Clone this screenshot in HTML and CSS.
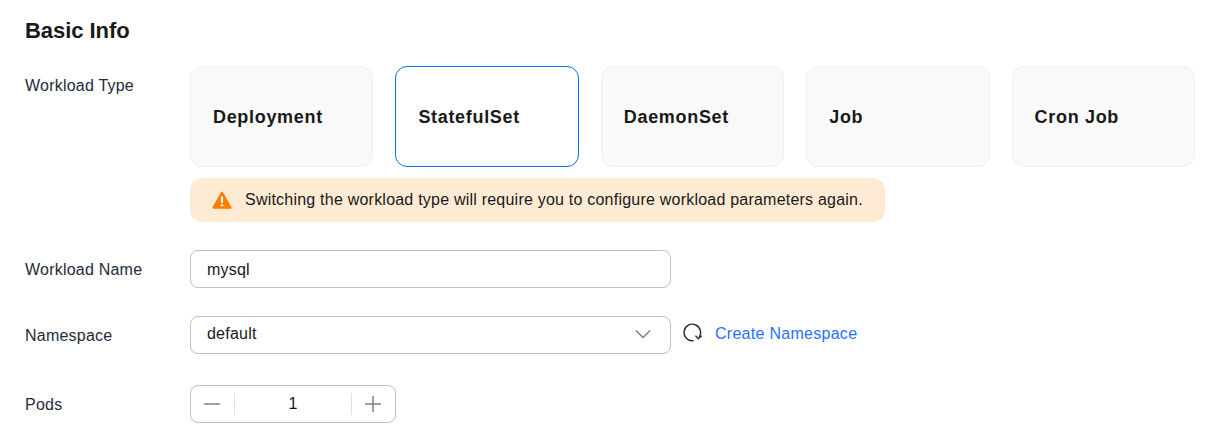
FILE: index.html
```html
<!DOCTYPE html>
<html lang="en">
<head>
<meta charset="utf-8">
<title>Basic Info</title>
<link rel="stylesheet" href="styles.css">
</head>
<body>
<h2 class="title">Basic Info</h2>
<div class="row row-type">
  <div class="label">Workload Type</div>
  <div class="field">
    <div class="cards">
      <div class="card">Deployment</div>
      <div class="card active">StatefulSet</div>
      <div class="card">DaemonSet</div>
      <div class="card">Job</div>
      <div class="card">Cron Job</div>
    </div>
    <div class="alert">
      <svg class="alert-icon" width="20" height="18" viewBox="0 0 20 18"><path d="M10 .6c.4 0 .7.2.9.5l8.6 15.200c.4.700-.1 1.400-.9 1.400H1.400c-.8 0-1.300-.7-.9-1.400L9.100 1.100c.2-.3.500-.5.900-.5z" fill="#ff7d00"/><rect x="9" y="5.500" width="2" height="6.500" rx=".6" fill="#fff"/><circle cx="10" cy="14.300" r="1.200" fill="#fff"/></svg>
      <span>Switching the workload type will require you to configure workload parameters again.</span>
    </div>
  </div>
</div>
<div class="row row-name">
  <div class="label">Workload Name</div>
  <div class="input">mysql</div>
</div>
<div class="row row-ns">
  <div class="label">Namespace</div>
  <div class="input select">
    <span>default</span>
    <svg width="16" height="10" viewBox="0 0 16 10"><path d="M1 1.500l7 7 7-7" fill="none" stroke="#808080" stroke-width="1.500"/></svg>
  </div>
  <svg class="refresh" width="20" height="20" viewBox="0 0 20 20"><path d="M10.500 17.700A8.300 8.300 0 1 1 16 14.400" fill="none" stroke="#252b3a" stroke-width="1.400"/><path d="M12.500 12.600L15.300 15.800 18.800 12.800" fill="none" stroke="#252b3a" stroke-width="1.400"/></svg>
  <a class="link">Create Namespace</a>
</div>
<div class="row row-pods">
  <div class="label">Pods</div>
  <div class="stepper">
    <div class="step"><svg width="16" height="16" viewBox="0 0 16 16"><path d="M0 8h16" stroke="#808080" stroke-width="1.500"/></svg></div>
    <div class="value">1</div>
    <div class="step"><svg width="16" height="16" viewBox="0 0 16 16"><path d="M0 8h16M8 0v16" stroke="#808080" stroke-width="1.500"/></svg></div>
  </div>
</div>
</body>
</html>
```
FILE: styles.css
```css
* { box-sizing: border-box; }
html, body { margin: 0; }
body {
  width: 1218px;
  height: 445px;
  overflow: hidden;
  background: #fff;
  color: #191919;
  font-family: "Liberation Sans", Arial, sans-serif;
  font-size: 16px;
  letter-spacing: .22px;
  padding: 18px 23px 0 25px;
}
.title {
  margin: 0 0 24px;
  padding-top: 1px;
  height: 24px;
  font-size: 22px;
  line-height: 24px;
  font-weight: 700;
  letter-spacing: -.05px;
}
.row { display: flex; align-items: center; }
.label { width: 165px; flex: none; color: #252b3a; padding-top: 2px; }
.row-type { align-items: flex-start; }
.row-type .label { line-height: 36px; }
.field { flex: 1; }
.cards {
  display: grid;
  grid-template-columns: repeat(5, 1fr);
  gap: 22px;
}
.card {
  height: 101px;
  display: flex;
  align-items: center;
  padding-left: 22px;
  padding-top: 2px;
  background: #f9f9f9;
  border: 1px solid #f0f0f0;
  border-radius: 12px;
  font-size: 18px;
  font-weight: 700;
  letter-spacing: .68px;
}
.card.active { background: #fff; border-color: #0a6fe8; }
.alert {
  display: inline-flex;
  align-items: center;
  gap: 13px;
  height: 44px;
  margin-top: 11px;
  padding: 0 22px;
  background: #ffebd4;
  border-radius: 12px;
}
.row-name { margin-top: 28px; }
.input {
  width: 481px;
  height: 38px;
  display: flex;
  align-items: center;
  padding: 2px 16px 0;
  background: #fff;
  border: 1px solid #c0c0c0;
  border-radius: 8px;
}
.row-ns { margin-top: 28px; }
.select { justify-content: space-between; padding: 0 19px 2px 16px; }
.refresh { margin: 0 0 4px 12px; }
.link { margin-left: 12px; padding-bottom: 2px; color: #2a6fff; letter-spacing: .28px; }
.row-pods { margin-top: 31px; }
.stepper {
  width: 206px;
  height: 38px;
  display: flex;
  align-items: center;
  border: 1px solid #c0c0c0;
  border-radius: 8px;
}
.step {
  width: 44px;
  height: 22px;
  flex: none;
  display: flex;
  align-items: center;
  justify-content: center;
  padding-right: 2px;
}
.step:first-child { border-right: 1px solid #dfdfdf; }
.step:last-child { border-left: 1px solid #dfdfdf; }
.value { flex: 1; text-align: center; }
```
